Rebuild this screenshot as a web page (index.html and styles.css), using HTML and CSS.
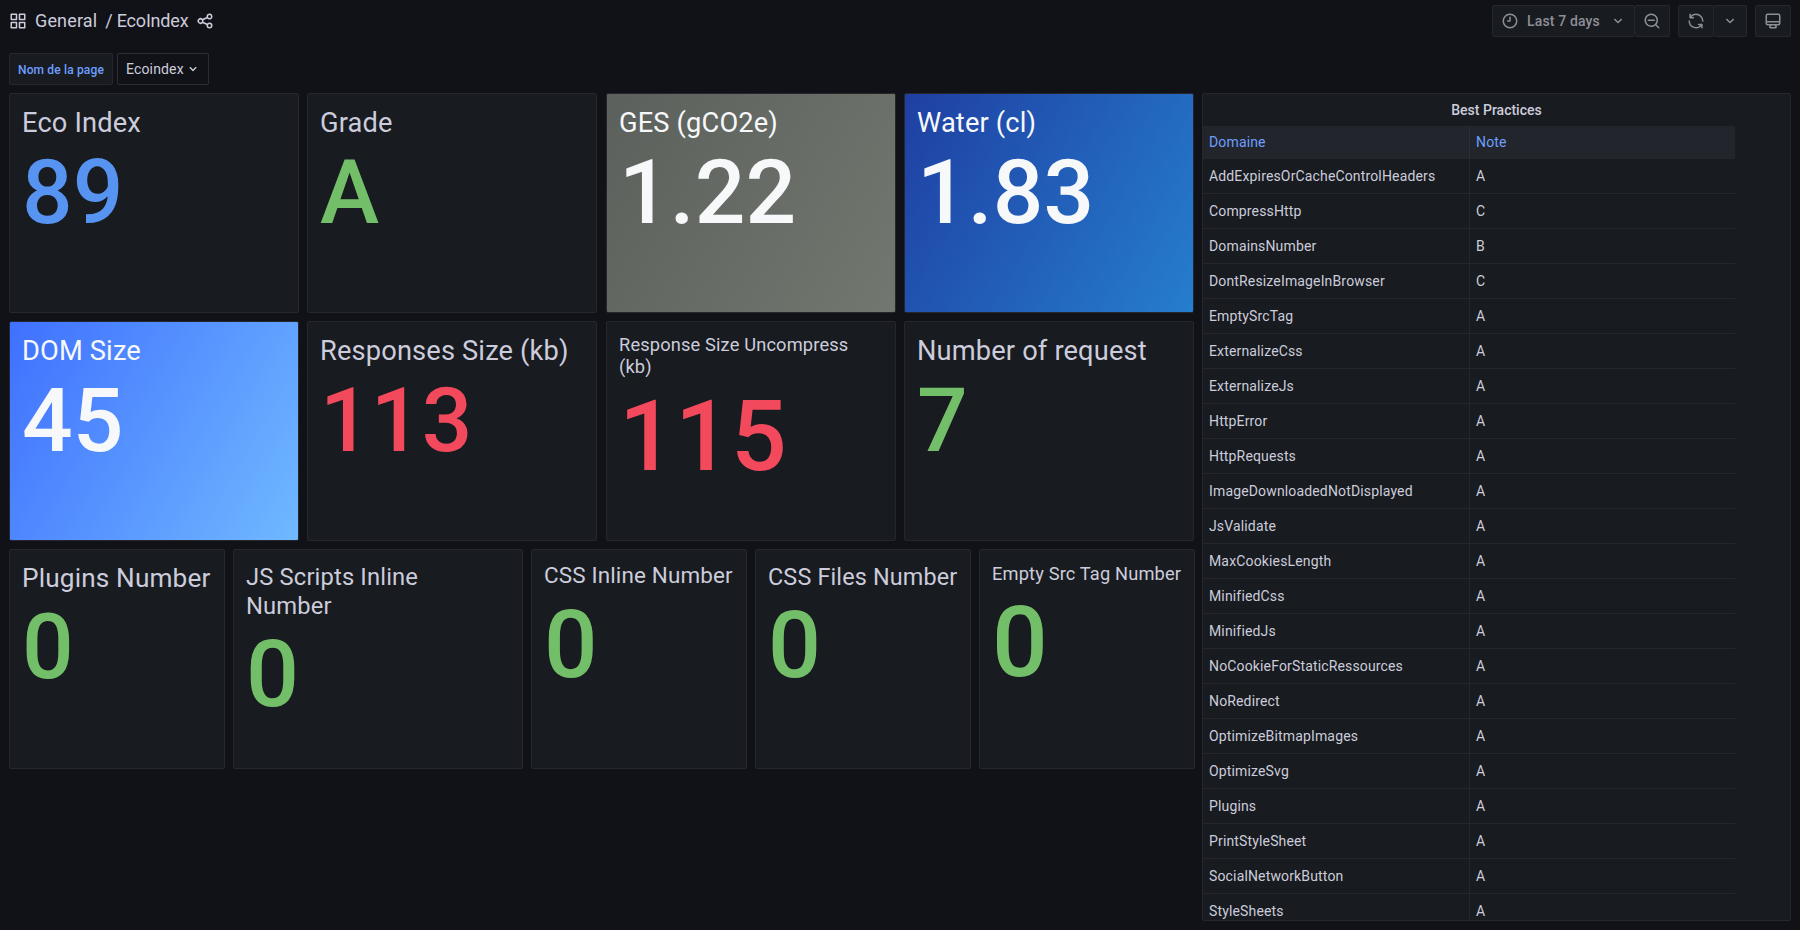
FILE: index.html
```html
<!DOCTYPE html>
<html lang="en">
<head>
<meta charset="utf-8">
<title>EcoIndex</title>
<link rel="stylesheet" href="styles.css">
</head>
<body>
<svg class="sprite" aria-hidden="true">
  <symbol id="angle-down" viewBox="0 0 24 24"><path d="M17,9.17a1,1,0,0,0-1.41,0L12,12.71,8.46,9.17a1,1,0,0,0-1.41,0,1,1,0,0,0,0,1.42l4.24,4.24a1,1,0,0,0,1.42,0L17,10.59A1,1,0,0,0,17,9.17Z"/></symbol>
</svg>
<header class="navbar">
  <div class="crumbs">
    <svg class="icon" viewBox="0 0 24 24"><path d="M10,13H3a1,1,0,0,0-1,1v7a1,1,0,0,0,1,1h7a1,1,0,0,0,1-1V14A1,1,0,0,0,10,13ZM9,20H4V15H9ZM21,2H14a1,1,0,0,0-1,1v7a1,1,0,0,0,1,1h7a1,1,0,0,0,1-1V3A1,1,0,0,0,21,2ZM20,9H15V4h5Zm1,4H14a1,1,0,0,0-1,1v7a1,1,0,0,0,1,1h7a1,1,0,0,0,1-1V14A1,1,0,0,0,21,13Zm-1,7H15V15h5ZM10,2H3A1,1,0,0,0,2,3v7a1,1,0,0,0,1,1h7a1,1,0,0,0,1-1V3A1,1,0,0,0,10,2ZM9,9H4V4H9Z"/></svg>
    <span class="folder">General</span>
    <span class="dash">/ EcoIndex</span>
    <svg class="icon" viewBox="0 0 24 24"><path d="M18,14a4,4,0,0,0-3.08,1.48l-5.1-2.35a3.64,3.64,0,0,0,0-2.26l5.1-2.35A4,4,0,1,0,14,6a4.17,4.17,0,0,0,.07.71L8.79,9.14a4,4,0,1,0,0,5.72l5.28,2.43A4.17,4.17,0,0,0,14,18a4,4,0,1,0,4-4ZM18,4a2,2,0,1,1-2,2A2,2,0,0,1,18,4ZM6,14a2,2,0,1,1,2-2A2,2,0,0,1,6,14Zm12,6a2,2,0,1,1,2-2A2,2,0,0,1,18,20Z"/></svg>
  </div>
  <div class="tools">
    <div class="group">
      <button class="btn range"><svg class="icon" viewBox="0 0 24 24"><path d="M12,2A10,10,0,1,0,22,12,10,10,0,0,0,12,2Zm0,18a8,8,0,1,1,8-8A8,8,0,0,1,12,20ZM12,6a1,1,0,0,0-1,1v4H9a1,1,0,0,0,0,2h3a1,1,0,0,0,1-1V7A1,1,0,0,0,12,6Z"/></svg><span class="range-text">Last 7 days</span><svg class="icon"><use href="#angle-down"/></svg></button>
      <button class="btn square"><svg class="icon" viewBox="0 0 24 24"><path d="M21.71,20.29,18,16.61A9,9,0,1,0,16.61,18l3.68,3.68a1,1,0,0,0,1.42,0A1,1,0,0,0,21.71,20.29ZM11,18a7,7,0,1,1,7-7A7,7,0,0,1,11,18Zm4-8H7a1,1,0,0,0,0,2h8a1,1,0,0,0,0-2Z"/></svg></button>
    </div>
    <div class="group">
      <button class="btn square"><svg class="icon" viewBox="0 0 24 24"><path d="M19.91,15.51H15.38a1,1,0,0,0,0,2h2.4A8,8,0,0,1,4,12a1,1,0,0,0-2,0,10,10,0,0,0,16.88,7.23V21a1,1,0,0,0,2,0V16.5A1,1,0,0,0,19.91,15.51ZM12,2A10,10,0,0,0,5.12,4.77V3a1,1,0,0,0-2,0V7.5a1,1,0,0,0,1,1h4.5a1,1,0,0,0,0-2H6.22A8,8,0,0,1,20,12a1,1,0,0,0,2,0A10,10,0,0,0,12,2Z"/></svg></button>
      <button class="btn narrow"><svg class="icon"><use href="#angle-down"/></svg></button>
    </div>
    <div class="group">
      <button class="btn square"><svg class="icon" viewBox="0 0 24 24"><path d="M19,2H5A3,3,0,0,0,2,5V15a3,3,0,0,0,3,3H7.64l-.58,1a2,2,0,0,0,0,2,2,2,0,0,0,1.75,1h6.46A2,2,0,0,0,17,21a2,2,0,0,0,0-2l-.59-1H19a3,3,0,0,0,3-3V5A3,3,0,0,0,19,2ZM8.77,20,10,18H14l1.2,2ZM20,15a1,1,0,0,1-1,1H5a1,1,0,0,1-1-1V14H20Zm0-3H4V5A1,1,0,0,1,5,4H19a1,1,0,0,1,1,1Z"/></svg></button>
    </div>
  </div>
</header>
<div class="variables">
  <div class="var-label">Nom de la page</div>
  <div class="var-value">Ecoindex<svg class="icon small"><use href="#angle-down"/></svg></div>
</div>
<main class="dashboard">
  <div class="stats">
    <div class="row four">
      <section class="panel stat"><h2 class="t27 low">Eco Index</h2><div class="v89 blue">89</div></section>
      <section class="panel stat"><h2 class="t27 low">Grade</h2><div class="v89 green">A</div></section>
      <section class="panel stat filled ges"><h2 class="t27 low">GES (gCO2e)</h2><div class="v89">1.22</div></section>
      <section class="panel stat filled water"><h2 class="t27 low">Water (cl)</h2><div class="v89">1.83</div></section>
    </div>
    <div class="row four">
      <section class="panel stat filled dom"><h2 class="t27 low">DOM Size</h2><div class="v89">45</div></section>
      <section class="panel stat"><h2 class="t27 low">Responses Size (kb)</h2><div class="v89 red">113</div></section>
      <section class="panel stat"><h2 class="t18 wrap">Response Size Uncompress (kb)</h2><div class="v98 red">115</div></section>
      <section class="panel stat"><h2 class="t27 low">Number of request</h2><div class="v89 green">7</div></section>
    </div>
    <div class="row five">
      <section class="panel stat"><h2 class="t26 low">Plugins Number</h2><div class="v91 green">0</div></section>
      <section class="panel stat"><h2 class="t24 low wrap">JS Scripts Inline Number</h2><div class="v93 green">0</div></section>
      <section class="panel stat"><h2 class="t22">CSS Inline Number</h2><div class="v94 green">0</div></section>
      <section class="panel stat"><h2 class="t23 low">CSS Files Number</h2><div class="v93 green">0</div></section>
      <section class="panel stat"><h2 class="t18 low">Empty Src Tag Number</h2><div class="v98 green">0</div></section>
    </div>
  </div>
  <section class="panel practices">
    <h2 class="panel-title">Best Practices</h2>
    <div class="table">
      <div class="tr th"><span>Domaine</span><span>Note</span></div>
      <div class="tr"><span>AddExpiresOrCacheControlHeaders</span><span>A</span></div>
      <div class="tr"><span>CompressHttp</span><span>C</span></div>
      <div class="tr"><span>DomainsNumber</span><span>B</span></div>
      <div class="tr"><span>DontResizeImageInBrowser</span><span>C</span></div>
      <div class="tr"><span>EmptySrcTag</span><span>A</span></div>
      <div class="tr"><span>ExternalizeCss</span><span>A</span></div>
      <div class="tr"><span>ExternalizeJs</span><span>A</span></div>
      <div class="tr"><span>HttpError</span><span>A</span></div>
      <div class="tr"><span>HttpRequests</span><span>A</span></div>
      <div class="tr"><span>ImageDownloadedNotDisplayed</span><span>A</span></div>
      <div class="tr"><span>JsValidate</span><span>A</span></div>
      <div class="tr"><span>MaxCookiesLength</span><span>A</span></div>
      <div class="tr"><span>MinifiedCss</span><span>A</span></div>
      <div class="tr"><span>MinifiedJs</span><span>A</span></div>
      <div class="tr"><span>NoCookieForStaticRessources</span><span>A</span></div>
      <div class="tr"><span>NoRedirect</span><span>A</span></div>
      <div class="tr"><span>OptimizeBitmapImages</span><span>A</span></div>
      <div class="tr"><span>OptimizeSvg</span><span>A</span></div>
      <div class="tr"><span>Plugins</span><span>A</span></div>
      <div class="tr"><span>PrintStyleSheet</span><span>A</span></div>
      <div class="tr"><span>SocialNetworkButton</span><span>A</span></div>
      <div class="tr"><span>StyleSheets</span><span>A</span></div>
    </div>
  </section>
</main>
</body>
</html>
```
FILE: styles.css
```css
* { box-sizing: border-box; }
body {
  margin: 0;
  height: 930px;
  overflow: hidden;
  background: #111217;
  color: #ccccdc;
  font: 400 14px/1.5 Roboto, sans-serif;
  letter-spacing: 0.15px;
}
h2 { margin: 0; font-weight: 400; }
.sprite { display: none; }
.icon { width: 18px; height: 18px; flex: none; fill: currentColor; display: block; }
.icon.small { width: 16px; height: 16px; }

.navbar { display: flex; justify-content: space-between; height: 42px; padding: 5px 9px 0; }
.crumbs { display: flex; align-items: center; height: 32px; font-size: 18px; line-height: 32px; }
.folder { margin-left: 8px; }
.dash { margin: 0 8px; letter-spacing: -0.2px; }
.tools { display: flex; gap: 8px; }
.group { display: flex; }
.btn {
  display: flex; align-items: center; justify-content: center;
  height: 32px; margin: 0; padding: 0 8px;
  background: #181b1f; color: #8e8e99; border: 1px solid #25272c; border-radius: 2px;
  font: 500 14px/30px Roboto, sans-serif; letter-spacing: 0.15px;
}
.btn + .btn { border-left: 0; }
.range { width: 143px; justify-content: flex-start; padding-right: 7px; }
.range-text { margin: 0 auto 0 8px; }
.square { width: 36px; }
.btn + .square { width: 35px; }
.narrow { width: 33px; }

.variables { display: flex; gap: 4px; padding: 11px 9px 8px; }
.var-label {
  width: 104px; height: 32px; padding-left: 8px; line-height: 32px;
  background: #181b1f; border: 1px solid #25272c; border-radius: 2px;
  color: #6e9fff; font-size: 12px; font-weight: 500; white-space: nowrap;
}
.var-value {
  display: flex; align-items: center; justify-content: space-between;
  width: 92px; height: 32px; padding: 0 7px 0 8px;
  border: 1px solid #2d2e34; border-radius: 2px;
}

.dashboard { display: flex; gap: 7px; padding: 0 9px; }
.stats { display: flex; flex-direction: column; gap: 8px; width: 1186px; }
.row { display: grid; height: 220px; }
.four { grid-template-columns: 298px 299px 298px 290px; }
.five { grid-template-columns: 224px 298px 224px 224px 216px; }
.panel { background: #181b1f; border: 1px solid #25272c; border-radius: 2px; }
.stat { width: 290px; padding: 12px; line-height: 1.2; overflow: hidden; }
.stat h2, .stat div { line-height: 1.2; }
.stat div { font-weight: 500; }
.five .stat { width: 216px; }
.five .stat:nth-child(2) { width: 290px; }
.filled { color: #f7f8fa; background-origin: border-box; }
.ges { background-image: linear-gradient(120deg, #5c605c, #72776f); }
.water { background-image: linear-gradient(120deg, #1f3fa2, #257ece); }
.dom { background-image: linear-gradient(120deg, #3f70ff, #70b9ff); }
.blue { color: #5794f2; }
.green { color: #73bf69; }
.red { color: #f2495c; }
.wrap { max-width: 240px; }
.low { padding-top: 1px; margin-bottom: -1px; }
.t27 { font-size: 27.25px; }
.t26 { font-size: 26.2px; }
.t24 { font-size: 23.75px; }
.t23 { font-size: 23.4px; }
.t22 { font-size: 22.45px; }
.t18 { font-size: 18.25px; }
.v89 { font-size: 89.2px; }
.v91 { font-size: 91px; }
.v93 { font-size: 93.3px; }
.v94 { font-size: 94.2px; }
.v98 { font-size: 98.2px; }

.practices { width: 589px; height: 828px; overflow: hidden; }
.panel-title { height: 32px; font-size: 14px; font-weight: 500; line-height: 32px; letter-spacing: 0; text-align: center; }
.table { width: 532px; }
.tr { display: grid; grid-template-columns: 267px 265px; height: 35px; border-bottom: 1px solid #25272c; }
.tr span { padding-left: 6px; line-height: 34px; white-space: nowrap; }
.tr span:first-child { border-right: 1px solid #25272c; }
.th { height: 33px; background: #22252b; color: #6e9fff; border-bottom: 0; }
.th span { line-height: 32px; }
.th span:first-child { border-right-color: #2d3037; }
```
